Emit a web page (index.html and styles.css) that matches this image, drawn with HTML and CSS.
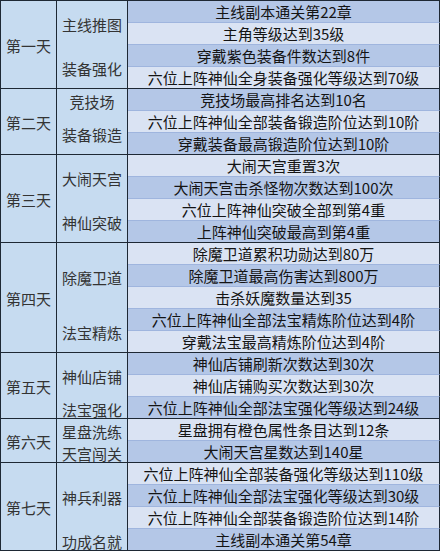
FILE: index.html
```html
<!DOCTYPE html>
<html lang="zh-CN">
<head>
<meta charset="utf-8">
<title>七日任务</title>
<link rel="stylesheet" href="styles.css">
</head>
<body>
<div class="table">
  <div class="day span4">第一天</div>
  <div class="cat span2">主线推图</div>
  <div class="task a">主线副本通关第22章</div>
  <div class="task b">主角等级达到35级</div>
  <div class="cat span2 end">装备强化</div>
  <div class="task a">穿戴紫色装备件数达到8件</div>
  <div class="task b end">六位上阵神仙全身装备强化等级达到70级</div>

  <div class="day span3">第二天</div>
  <div class="cat">竞技场</div>
  <div class="task a">竞技场最高排名达到10名</div>
  <div class="cat span2 end">装备锻造</div>
  <div class="task b">六位上阵神仙全部装备锻造阶位达到10阶</div>
  <div class="task a end">穿戴装备最高锻造阶位达到10阶</div>

  <div class="day span4">第三天</div>
  <div class="cat span2">大闹天宫</div>
  <div class="task b">大闹天宫重置3次</div>
  <div class="task a">大闹天宫击杀怪物次数达到100次</div>
  <div class="cat span2 end">神仙突破</div>
  <div class="task b">六位上阵神仙突破全部到第4重</div>
  <div class="task a end">上阵神仙突破最高到第4重</div>

  <div class="day span5">第四天</div>
  <div class="cat span3">除魔卫道</div>
  <div class="task b">除魔卫道累积功勋达到80万</div>
  <div class="task a">除魔卫道最高伤害达到800万</div>
  <div class="task b">击杀妖魔数量达到35</div>
  <div class="cat span2 end">法宝精炼</div>
  <div class="task a">六位上阵神仙全部法宝精炼阶位达到4阶</div>
  <div class="task b end">穿戴法宝最高精炼阶位达到4阶</div>

  <div class="day span3">第五天</div>
  <div class="cat span2">神仙店铺</div>
  <div class="task a">神仙店铺刷新次数达到30次</div>
  <div class="task b">神仙店铺购买次数达到30次</div>
  <div class="cat end">法宝强化</div>
  <div class="task a end">六位上阵神仙全部法宝强化等级达到24级</div>

  <div class="day span2">第六天</div>
  <div class="cat">星盘洗练</div>
  <div class="task b">星盘拥有橙色属性条目达到12条</div>
  <div class="cat end">天宫闯关</div>
  <div class="task a end">大闹天宫星数达到140星</div>

  <div class="day span4">第七天</div>
  <div class="cat span3">神兵利器</div>
  <div class="task b">六位上阵神仙全部装备强化等级达到110级</div>
  <div class="task a">六位上阵神仙全部法宝强化等级达到30级</div>
  <div class="task b">六位上阵神仙全部装备锻造阶位达到14阶</div>
  <div class="cat end">功成名就</div>
  <div class="task a end">主线副本通关第54章</div>
</div>
</body>
</html>
```

FILE: styles.css
```css
html, body {
  margin: 0;
  padding: 0;
  background: #ffffff;
}

body {
  font-family: "Noto Sans CJK SC", "Microsoft YaHei", sans-serif;
  font-size: 15px;
}

.table {
  width: 440px;
  box-sizing: border-box;
  border-top: 1px solid #1e2834;
  border-left: 1px solid #1e2834;
  display: grid;
  grid-template-columns: 56px 71px 312px;
  grid-auto-rows: 22px;
}

.table > div {
  box-sizing: border-box;
  border-right: 1px solid #1e2834;
  display: flex;
  align-items: center;
  justify-content: center;
  white-space: nowrap;
  line-height: 20px;
}

.day {
  grid-column: 1;
  background: #c6dbf0;
  color: #333333;
  border-bottom: 1px solid #1e2834;
  padding-top: 2px;
}

.cat {
  grid-column: 2;
  background: #c6dbf0;
  color: #333333;
  padding-top: 3px;
}

.cat.end {
  border-bottom: 1px solid #1e2834;
  padding-top: 4px;
}

.task {
  grid-column: 3;
  color: #141414;
  border-bottom: 1px solid #9fb5de;
}

.task.end {
  border-bottom-color: #1e2834;
}

.task.a {
  background: #b4c7e7;
}

.task.b {
  background: #dae3f3;
}

.span2 { grid-row: span 2; }
.span3 { grid-row: span 3; }
.span4 { grid-row: span 4; }
.span5 { grid-row: span 5; }
```
